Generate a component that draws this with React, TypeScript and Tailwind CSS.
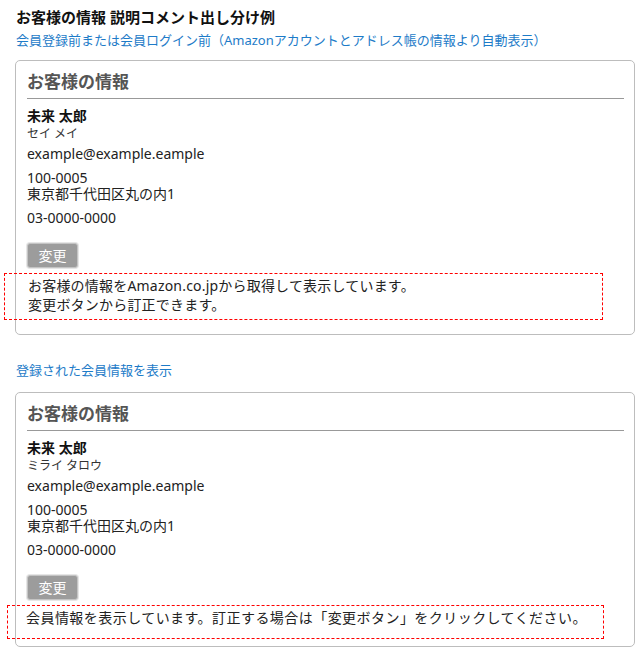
import React from "react";

const font = { fontFamily: '"Noto Sans", "Noto Sans CJK JP", sans-serif' };

function Card({
  kana,
  note,
  boxClass,
}: {
  kana: string;
  note: React.ReactNode;
  boxClass: string;
}) {
  return (
    <div className="ml-[15px] w-[620px] rounded-[5px] border border-[#bdbdbd] pl-[11px] pr-[10px]">
      <div className="border-b border-[#999] pt-[10px] pb-[5px] text-[17px] font-bold leading-[22px] text-[#555]">
        お客様の情報
      </div>
      <div className="mt-[8px] text-[14px] font-bold leading-[18px] text-[#111]">未来 太郎</div>
      <div className="mt-[1px] text-[12px] leading-[16px] text-[#333]">{kana}</div>
      <div className="mt-[3px] text-[14px] leading-[18px] text-[#222]">example@example.eample</div>
      <div className="mt-[7px] text-[14px] leading-[16px] text-[#222]">
        100-0005
        <br />
        東京都千代田区丸の内1
      </div>
      <div className="mt-[7px] text-[14px] leading-[18px] text-[#222]">03-0000-0000</div>
      <div className="mt-[16px] flex">
        <div className="flex h-[25px] w-[51px] items-center justify-center rounded-[3px] border border-[#c4c4c4] bg-[#9c9c9c] text-[14px] text-white shadow-[0_0_0_1px_#e6e6e6]">
          変更
        </div>
      </div>
      <div className={boxClass}>{note}</div>
    </div>
  );
}

export default function App() {
  return (
    <div className="w-[640px] bg-white pb-[6px]" style={font}>
      <div className="pl-[16px] pt-[7px] text-[15px] font-bold leading-[20px] text-[#111]">
        お客様の情報 説明コメント出し分け例
      </div>
      <div className="mt-[3px] pl-[16px] text-[13px] leading-[20px] text-[#1d7bc8]">
        会員登録前または会員ログイン前（Amazonアカウントとアドレス帳の情報より自動表示）
      </div>
      <div className="mt-[10px]">
        <Card
          kana="セイ メイ"
          boxClass="mt-[5px] mb-[14px] ml-[-23px] w-[599px] border border-dashed border-[#f00] pl-[23px] pt-[2px] pb-[5px] text-[14px] leading-[19px] text-[#222] tracking-[0.2px]"
          note={
            <>
              <div>お客様の情報をAmazon.co.jpから取得して表示しています。</div>
              <div>変更ボタンから訂正できます。</div>
            </>
          }
        />
      </div>
      <div className="mt-[25px] pl-[16px] text-[13px] leading-[20px] text-[#1d7bc8]">
        登録された会員情報を表示
      </div>
      <div className="mt-[12px]">
        <Card
          kana="ミライ タロウ"
          boxClass="mt-[5px] mb-[7px] ml-[-20px] w-[597px] border border-dashed border-[#f00] pl-[18px] pt-[2px] pb-[11px] text-[14px] leading-[19px] text-[#222] tracking-[0.45px]"
          note={<div>会員情報を表示しています。訂正する場合は「変更ボタン」をクリックしてください。</div>}
        />
      </div>
    </div>
  );
}
